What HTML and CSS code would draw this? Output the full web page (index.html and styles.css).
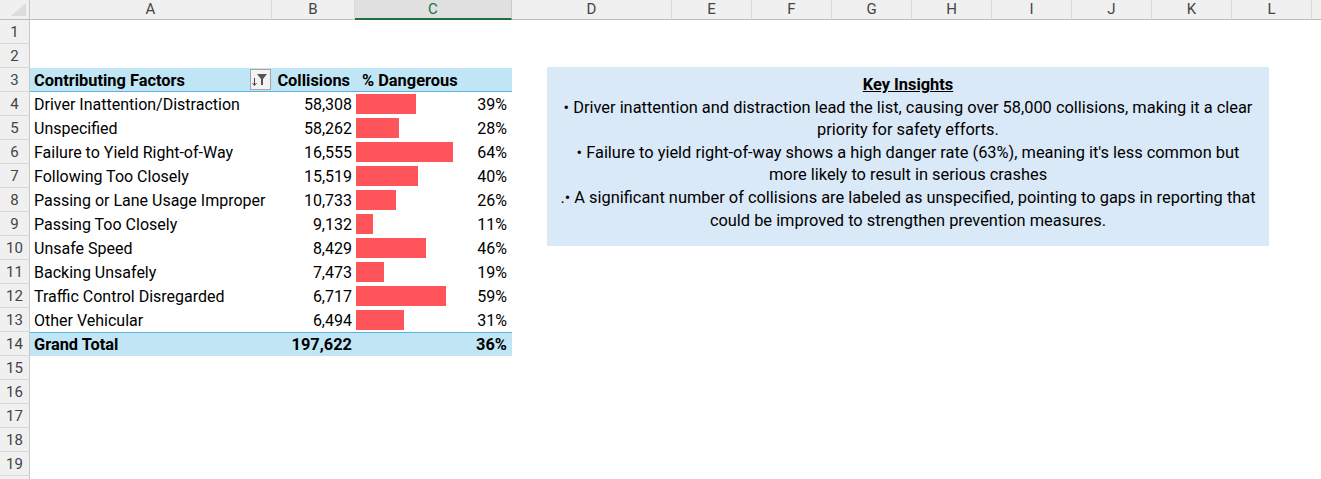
FILE: index.html
```html
<!DOCTYPE html>
<html>
<head>
<meta charset="utf-8">
<link rel="stylesheet" href="styles.css">
</head>
<body>
<div class="sheet">
  <div class="colhdr">
    <div class="corner"><svg width="29" height="19" viewBox="0 0 29 19"><polygon points="26,3 26,16 11,16" fill="#dcdcdc"/></svg></div>
    <div class="ch w-a">A</div>
    <div class="ch w-b">B</div>
    <div class="ch w-c sel">C</div>
    <div class="ch w-d">D</div>
    <div class="ch w-e">E</div>
    <div class="ch w-e">F</div>
    <div class="ch w-e">G</div>
    <div class="ch w-e">H</div>
    <div class="ch w-e">I</div>
    <div class="ch w-e">J</div>
    <div class="ch w-e">K</div>
    <div class="ch w-e">L</div>
    <div class="ch w-rest"></div>
  </div>

  <div class="row"><div class="rh">1</div></div>
  <div class="row"><div class="rh">2</div></div>
  <div class="row"><div class="rh">3</div>
    <div class="cell w-a pv-head bold a-left"><span class="hd-text">Contributing Factors</span>
      <span class="fbtn"><svg width="19" height="19" viewBox="0 0 19 19"><path d="M3.5 8v7" stroke="#444" stroke-width="1"/><path d="M1.5 13l2 2.5 2-2.5" fill="none" stroke="#444" stroke-width="1"/><polygon points="6,4 16,4 12,9 12,15 10,15 10,9" fill="#555"/></svg></span>
    </div>
    <div class="cell w-b pv-head bold a-right pr-hd">Collisions</div>
    <div class="cell w-c pv-head bold pl-hd">% Dangerous</div>
  </div>
  <div class="row"><div class="rh">4</div><div class="cell w-a a-left">Driver Inattention/Distraction</div><div class="cell w-b a-right">58,308</div><div class="cell w-c bar-cell"><span class="bar" style="width:60px"></span><span class="pct">39%</span></div></div>
  <div class="row"><div class="rh">5</div><div class="cell w-a a-left">Unspecified</div><div class="cell w-b a-right">58,262</div><div class="cell w-c bar-cell"><span class="bar" style="width:43px"></span><span class="pct">28%</span></div></div>
  <div class="row"><div class="rh">6</div><div class="cell w-a a-left">Failure to Yield Right-of-Way</div><div class="cell w-b a-right">16,555</div><div class="cell w-c bar-cell"><span class="bar" style="width:97px"></span><span class="pct">64%</span></div></div>
  <div class="row"><div class="rh">7</div><div class="cell w-a a-left">Following Too Closely</div><div class="cell w-b a-right">15,519</div><div class="cell w-c bar-cell"><span class="bar" style="width:62px"></span><span class="pct">40%</span></div></div>
  <div class="row"><div class="rh">8</div><div class="cell w-a a-left">Passing or Lane Usage Improper</div><div class="cell w-b a-right">10,733</div><div class="cell w-c bar-cell"><span class="bar" style="width:40px"></span><span class="pct">26%</span></div></div>
  <div class="row"><div class="rh">9</div><div class="cell w-a a-left">Passing Too Closely</div><div class="cell w-b a-right">9,132</div><div class="cell w-c bar-cell"><span class="bar" style="width:17px"></span><span class="pct">11%</span></div></div>
  <div class="row"><div class="rh">10</div><div class="cell w-a a-left">Unsafe Speed</div><div class="cell w-b a-right">8,429</div><div class="cell w-c bar-cell"><span class="bar" style="width:70px"></span><span class="pct">46%</span></div></div>
  <div class="row"><div class="rh">11</div><div class="cell w-a a-left">Backing Unsafely</div><div class="cell w-b a-right">7,473</div><div class="cell w-c bar-cell"><span class="bar" style="width:28px"></span><span class="pct">19%</span></div></div>
  <div class="row"><div class="rh">12</div><div class="cell w-a a-left">Traffic Control Disregarded</div><div class="cell w-b a-right">6,717</div><div class="cell w-c bar-cell"><span class="bar" style="width:90px"></span><span class="pct">59%</span></div></div>
  <div class="row"><div class="rh">13</div><div class="cell w-a a-left">Other Vehicular</div><div class="cell w-b a-right">6,494</div><div class="cell w-c bar-cell"><span class="bar" style="width:48px"></span><span class="pct">31%</span></div></div>
  <div class="row"><div class="rh">14</div><div class="cell w-a pv-total bold a-left">Grand Total</div><div class="cell w-b pv-total bold a-right">197,622</div><div class="cell w-c pv-total bold a-right pr-pct">36%</div></div>
  <div class="row"><div class="rh">15</div></div>
  <div class="row"><div class="rh">16</div></div>
  <div class="row"><div class="rh">17</div></div>
  <div class="row"><div class="rh">18</div></div>
  <div class="row"><div class="rh">19</div></div>
  <div class="row"><div class="rh"></div></div>

  <div class="insights">
    <div class="ins-title">Key Insights</div>
    <div class="ins-line">• Driver inattention and distraction lead the list, causing over 58,000 collisions, making it a clear</div>
    <div class="ins-line">priority for safety efforts.</div>
    <div class="ins-line">• Failure to yield right-of-way shows a high danger rate (63%), meaning it's less common but</div>
    <div class="ins-line">more likely to result in serious crashes</div>
    <div class="ins-line">.• A significant number of collisions are labeled as unspecified, pointing to gaps in reporting that</div>
    <div class="ins-line">could be improved to strengthen prevention measures.</div>
  </div>
</div>
</body>
</html>
```

FILE: styles.css
```css
* { box-sizing: border-box; }
body {
  margin: 0;
  background: #fff;
  overflow: hidden;
  font-family: Roboto, "Liberation Sans", Arial, sans-serif;
  color: #000;
}
.sheet {
  position: relative;
  width: 1321px;
  height: 479px;
  overflow: hidden;
}
.colhdr {
  display: flex;
  height: 20px;
}
.corner {
  width: 30px;
  flex: none;
  height: 20px;
  background: #f0f0f0;
  border-right: 1px solid #c8c8c8;
  border-bottom: 1px solid #bdbdbd;
}
.corner svg { display: block; }
.ch {
  flex: none;
  height: 20px;
  background: #f0f0f0;
  border-right: 1px solid #d9d9d9;
  border-bottom: 1px solid #bdbdbd;
  text-align: center;
  font-size: 15px;
  line-height: 19px;
  color: #444;
}
.ch.sel {
  background: #e0e0e0;
  color: #1e6e42;
  border-bottom: 2px solid #1e6e42;
  border-right-color: #c9c9c9;
}
.w-a { width: 242px; }
.w-b { width: 83px; }
.w-c { width: 157px; }
.w-d { width: 160px; }
.w-e { width: 80px; }
.w-rest { flex: 1; border-right: none; }

.row {
  display: flex;
  height: 24px;
}
.rh {
  flex: none;
  width: 30px;
  height: 24px;
  background: #f0f0f0;
  border-right: 1px solid #c8c8c8;
  border-bottom: 1px solid #d9d9d9;
  text-align: center;
  font-size: 15px;
  line-height: 25px;
  color: #444;
}
.cell {
  flex: none;
  height: 24px;
  font-size: 16px;
  line-height: 25px;
  white-space: nowrap;
  overflow: hidden;
}
.a-left { padding-left: 4px; }
.a-right { text-align: right; padding-right: 3px; }
.bold { font-weight: 700; }
.pv-head {
  background: #c0e6f5;
  box-shadow: inset 0 -1px 0 #5cb3e0;
}
.pv-total {
  background: #c0e6f5;
  box-shadow: inset 0 1px 0 #5cb3e0;
}
.hd-text { font-size: 16.4px; }
.w-b.pv-head, .w-c.pv-head, .pv-total { font-size: 16.4px; }
.w-a.pv-head {
  display: flex;
  justify-content: space-between;
  align-items: flex-start;
  padding-right: 1px;
}
.pr-hd { padding-right: 5px; }
.pl-hd { padding-left: 7px; }
.pr-pct { padding-right: 5px; }
.fbtn {
  margin-top: 1px;
  width: 21px;
  height: 21px;
  border: 1px solid #a6a6a6;
  background: #f3f3f3;
}
.fbtn svg { display: block; }

.bar-cell {
  position: relative;
  display: flex;
  align-items: center;
  justify-content: flex-end;
  padding-right: 5px;
  padding-top: 1px;
}
.bar {
  position: absolute;
  left: 1px;
  top: 2px;
  height: 20px;
  background: #ff555a;
}
.pct { position: relative; }

.insights {
  position: absolute;
  left: 547px;
  top: 67px;
  width: 722px;
  height: 179px;
  background: #dae9f8;
  padding-top: 7px;
  text-align: center;
  font-size: 16.4px;
  line-height: 22.6px;
  white-space: nowrap;
}
.ins-title {
  font-weight: 700;
  text-decoration: underline;
}
```
